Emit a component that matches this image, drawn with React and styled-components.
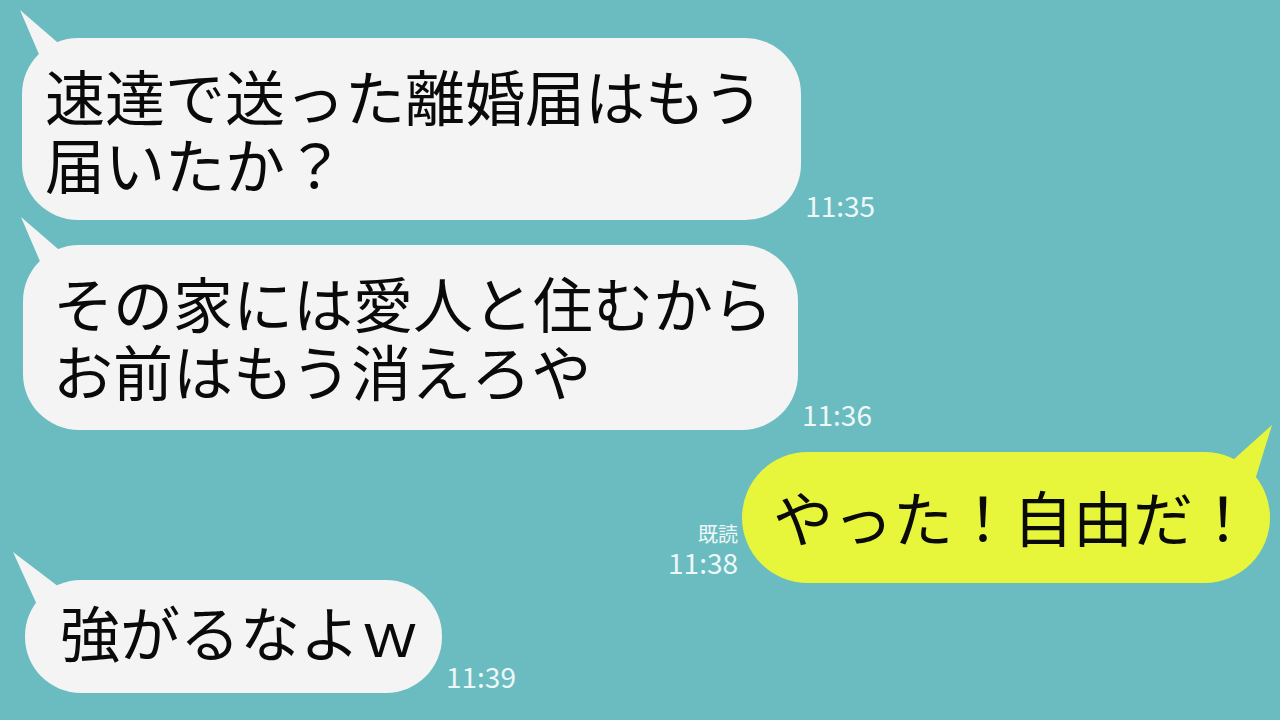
import React from "react";
import styled, { createGlobalStyle, css } from "styled-components";

const GlobalStyle = createGlobalStyle`
  html, body {
    margin: 0;
    padding: 0;
    background: #6bbcc0;
  }
  body {
    font-family: "Noto Sans CJK JP", "Noto Sans", sans-serif;
  }
`;

const Screen = styled.main`
  width: 1280px;
  height: 720px;
  overflow: hidden;
  background: #6bbcc0;
  box-sizing: border-box;
  padding: 38px 10px 0 22px;
`;

const Thread = styled.div`
  display: flex;
  flex-direction: column;
`;

const Row = styled.div`
  display: flex;
  align-items: flex-end;
  gap: 4px;
  margin-top: ${(p) => p.$mt || 0}px;
  margin-left: ${(p) => p.$ml || 0}px;
  justify-content: ${(p) => (p.$mine ? "flex-end" : "flex-start")};
`;

/* speech-bubble tails, drawn as clipped triangles hanging off the corners */
const tails = {
  left: css`
    &::before {
      left: -2px;
      top: -28px;
      width: 46px;
      height: 50px;
      clip-path: polygon(0 0, 44px 38px, 21px 49px);
    }
  `,
  leftWide: css`
    &::before {
      left: -12px;
      top: -28px;
      width: 48px;
      height: 56px;
      clip-path: polygon(0 0, 46px 35px, 25px 55px);
    }
  `,
  right: css`
    &::before {
      right: -2px;
      top: -27px;
      width: 40px;
      height: 56px;
      clip-path: polygon(40px 0, 1px 35px, 23px 55px);
    }
  `,
};

const Bubble = styled.div`
  position: relative;
  background: ${(p) => (p.$mine ? "#e7f53b" : "#f4f4f4")};
  color: #0a0a0a;
  font-size: 60px;
  line-height: 68px;
  white-space: nowrap;
  border-radius: ${(p) => p.$radius || 56}px;
  padding: ${(p) => p.$pad};

  &::before {
    content: "";
    position: absolute;
    background: inherit;
  }
  ${(p) => tails[p.$tail]}
`;

const Line = styled.span`
  display: block;
`;

const Meta = styled.div`
  display: flex;
  flex-direction: column;
  align-items: flex-end;
  gap: 4px;
  margin-bottom: ${(p) => p.$mb || 0}px;
  color: #eef8f8;
`;

const Read = styled.span`
  font-size: 20px;
  line-height: 20px;
`;

const Time = styled.span`
  font-size: 28px;
  line-height: 28px;
`;

export default function App() {
  return (
    <>
      <GlobalStyle />
      <Screen>
        <Thread>
          <Row>
            <Bubble $tail="left" $pad="23px 38px 23px 23px">
              <Line>速達で送った離婚届はもう</Line>
              <Line>届いたか？</Line>
            </Bubble>
            <Meta $mb={1}>
              <Time>11:35</Time>
            </Meta>
          </Row>

          <Row $mt={25} $ml={1}>
            <Bubble $tail="left" $pad="23px 25px 26px 30px">
              <Line>その家には愛人と住むから</Line>
              <Line>お前はもう消えろや</Line>
            </Bubble>
            <Meta $mb={2}>
              <Time>11:36</Time>
            </Meta>
          </Row>

          <Row $mt={22} $mine>
            <Meta $mb={7}>
              <Read>既読</Read>
              <Time>11:38</Time>
            </Meta>
            <Bubble $mine $tail="right" $radius={66} $pad="30px 17px 33px 31px">
              やった！自由だ！
            </Bubble>
          </Row>

          <Row $mt={-3} $ml={3}>
            <Bubble $tail="leftWide" $pad="17px 22px 28px 35px">
              強がるなよｗ
            </Bubble>
            <Meta $mb={3}>
              <Time>11:39</Time>
            </Meta>
          </Row>
        </Thread>
      </Screen>
    </>
  );
}
